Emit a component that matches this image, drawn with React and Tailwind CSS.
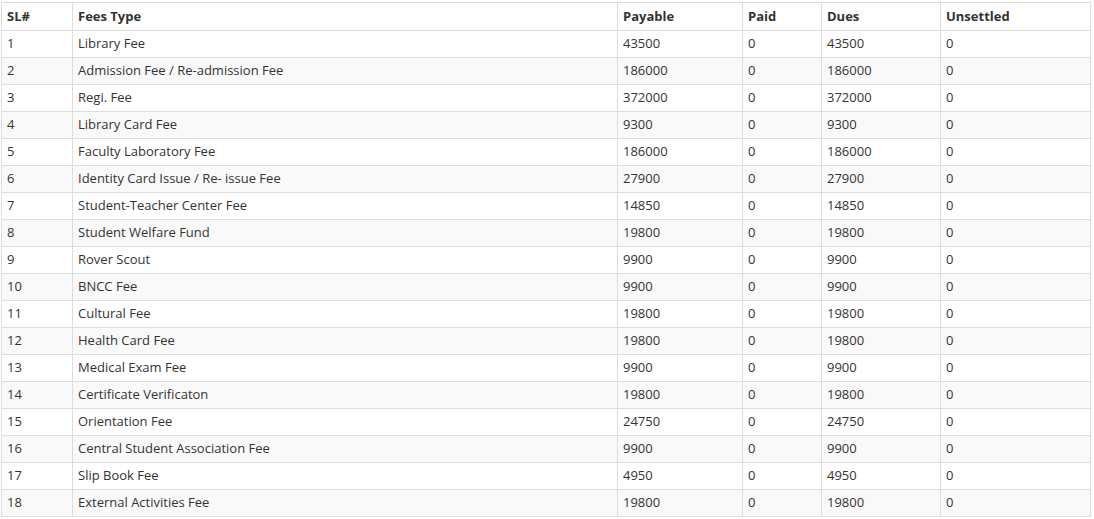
import React from 'react';

const rows = [
  ['Library Fee', 43500],
  ['Admission Fee / Re-admission Fee', 186000],
  ['Regi. Fee', 372000],
  ['Library Card Fee', 9300],
  ['Faculty Laboratory Fee', 186000],
  ['Identity Card Issue / Re- issue Fee', 27900],
  ['Student-Teacher Center Fee', 14850],
  ['Student Welfare Fund', 19800],
  ['Rover Scout', 9900],
  ['BNCC Fee', 9900],
  ['Cultural Fee', 19800],
  ['Health Card Fee', 19800],
  ['Medical Exam Fee', 9900],
  ['Certificate Verificaton', 19800],
  ['Orientation Fee', 24750],
  ['Central Student Association Fee', 9900],
  ['Slip Book Fee', 4950],
  ['External Activities Fee', 19800],
];

const td = 'border border-[#ddd] px-[5px] h-[27px] align-middle';

const App = () => {
  return (
    <div className="bg-white pt-[2px] pl-[1px] pr-[3px] text-[13px] text-[#333]" style={{ fontFamily: '"Open Sans", sans-serif' }}>
      <table className="w-full border-collapse">
        <tbody>
          <tr className="font-bold">
            <td className={`${td} w-[71px] h-[28px]`}>SL#</td>
            <td className={`${td} w-[545px]`}>Fees Type</td>
            <td className={`${td} w-[125px]`}>Payable</td>
            <td className={`${td} w-[79px]`}>Paid</td>
            <td className={`${td} w-[119px]`}>Dues</td>
            <td className={td}>Unsettled</td>
          </tr>
          {rows.map(([name, amt], i) => (
            <tr key={i} className={i % 2 === 1 ? 'bg-[#f9f9f9]' : 'bg-white'}>
              <td className={td}>{i + 1}</td>
              <td className={td}>{name}</td>
              <td className={td}>{amt}</td>
              <td className={td}>0</td>
              <td className={td}>{amt}</td>
              <td className={td}>0</td>
            </tr>
          ))}
        </tbody>
      </table>
    </div>
  );
};

export default App;
